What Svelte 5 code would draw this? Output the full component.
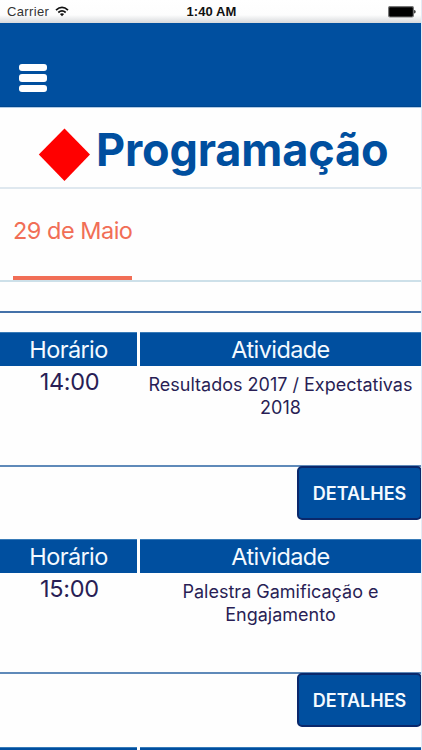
<script>
  const sessions = [
    { time: '14:00', lines: ['Resultados 2017 / Expectativas', '2018'] },
    { time: '15:00', lines: ['Palestra Gamificação e', 'Engajamento'] }
  ];
</script>

<div class="screen">
  <div class="status">
    <div class="carrier">
      <span>Carrier</span>
      <svg width="14" height="11" viewBox="0 0 14 11" fill="none" stroke="#111" stroke-width="1.7">
        <path d="M1 4.1Q7 -1.4 13 4.1" />
        <path d="M3.3 6.5Q7 3.1 10.7 6.5" />
        <path d="M7 10.3L4.9 8.1Q7 6.4 9.1 8.1Z" fill="#111" stroke="none" />
      </svg>
    </div>
    <span class="clock">1:40 AM</span>
    <svg class="battery" width="28" height="12" viewBox="0 0 28 12">
      <rect x="0.6" y="0.6" width="24.8" height="10.4" rx="1.4" fill="#000" stroke="#777" stroke-width="1.2" />
      <path d="M26 4Q27.8 4.2 27.8 5.8T26 7.6Z" fill="#444" />
    </svg>
  </div>

  <nav>
    <button class="menu" aria-label="Menu"><i></i><i></i><i></i></button>
  </nav>

  <header>
    <svg width="52" height="54" viewBox="0 0 52 54"><path d="M26.5 0.5L52 26.5L26.5 53L0.8 26.5Z" fill="#f00" /></svg>
    <h1>Programação</h1>
  </header>

  <div class="tabs"><div class="tab"><span>29 de Maio</span></div></div>
  <div class="gap"></div>

  <main>
    {#each sessions as session}
      <section>
        <div class="row head">
          <div class="col"><span class="h-time">Horário</span></div>
          <div class="col"><span class="h-act">Atividade</span></div>
        </div>
        <div class="row body">
          <div class="time"><span>{session.time}</span></div>
          <div class="activity">
            {#each session.lines as line}<div>{line}</div>{/each}
          </div>
        </div>
        <div class="actions"><button class="details">DETALHES</button></div>
      </section>
    {/each}
    <div class="row"><div class="col"></div><div class="col"></div></div>
  </main>
</div>

<style>
  :global(body) { background: #fefefe; overflow: hidden; }
  .screen {
    width: 422px; height: 750px; overflow: hidden; box-sizing: border-box;
    border-right: 1px solid #e3ebf5; background: #fefefe;
    display: flex; flex-direction: column;
    font-family: Inter, "Liberation Sans", sans-serif;
  }
  .screen > * { flex-shrink: 0; }
  button { border: 0; padding: 0; font-family: inherit; }
  .status {
    height: 23px; width: 422px; box-sizing: border-box; padding: 0 6px 0 7px;
    display: grid; grid-template-columns: 1fr auto 1fr; align-items: center;
    background: linear-gradient(#fff 0, #fdfdfd 65%, #d7d9dc 100%);
    font-family: "Liberation Sans", sans-serif; font-size: 13px; color: #333;
  }
  .carrier { display: flex; align-items: center; gap: 6px; letter-spacing: 0.35px; }
  .clock { font-weight: 700; color: #111; letter-spacing: 0.1px; }
  .battery { justify-self: end; }
  nav {
    height: 84px; width: 422px; box-sizing: border-box; padding: 41px 0 0 19px;
    background: #004f9f; border-bottom: 1px solid #00478f;
  }
  .menu { display: flex; flex-direction: column; gap: 3px; background: none; }
  .menu i { width: 28px; height: 7.3px; border-radius: 3px; background: #fff; }
  header {
    height: 82px; box-sizing: border-box; border-bottom: 2px solid #dfe8ef;
    border-top: 1px solid #b0cbe6; padding: 20px 0 0 38px; display: flex; gap: 6px;
  }
  h1 {
    margin: -6px 0 0; font-size: 45px; line-height: 56px; font-weight: 700;
    color: #004f9f; letter-spacing: -0.15px; white-space: nowrap;
  }
  .tabs {
    height: 93px; box-sizing: border-box; padding-left: 13px;
    border-bottom: 2px solid #cde0e9;
  }
  .tab {
    width: 119px; height: 91px; box-sizing: border-box; padding-top: 26px;
    border-bottom: 4px solid #f16e56; color: #f16e56;
    font-size: 23.5px; line-height: 32px; white-space: nowrap; letter-spacing: -0.5px;
  }
  .gap { height: 31px; box-sizing: border-box; border-bottom: 2px solid #4471a9; }
  main { padding-top: 19px; }
  section { height: 207.4px; }
  .row { display: grid; grid-template-columns: 137px 1fr; column-gap: 3px; }
  .col {
    height: 34px; box-sizing: border-box; background: #004f9f; color: #f4faff;
    border-top: 1px solid #387bb8; display: flex; align-items: center; justify-content: center;
    font-size: 23.5px; line-height: 32px; letter-spacing: -0.6px;
  }
  .body { height: 101px; box-sizing: border-box; border-bottom: 2px solid #5f8ab9; color: #291e55; text-align: center; }
  .time { font-size: 23.5px; line-height: 31px; padding-left: 2px; letter-spacing: -0.3px; }
  .activity { font-size: 18px; line-height: 23px; padding-top: 6.5px; white-space: nowrap; }
  .actions { display: flex; justify-content: flex-end; margin-top: -1px; margin-right: -1px; }
  .details {
    width: 125px; height: 54px; background: #004f9f; border: 2px solid #0a286b;
    border-radius: 5px; color: #f4faff; font-size: 18px; font-weight: 600;
  }
</style>
